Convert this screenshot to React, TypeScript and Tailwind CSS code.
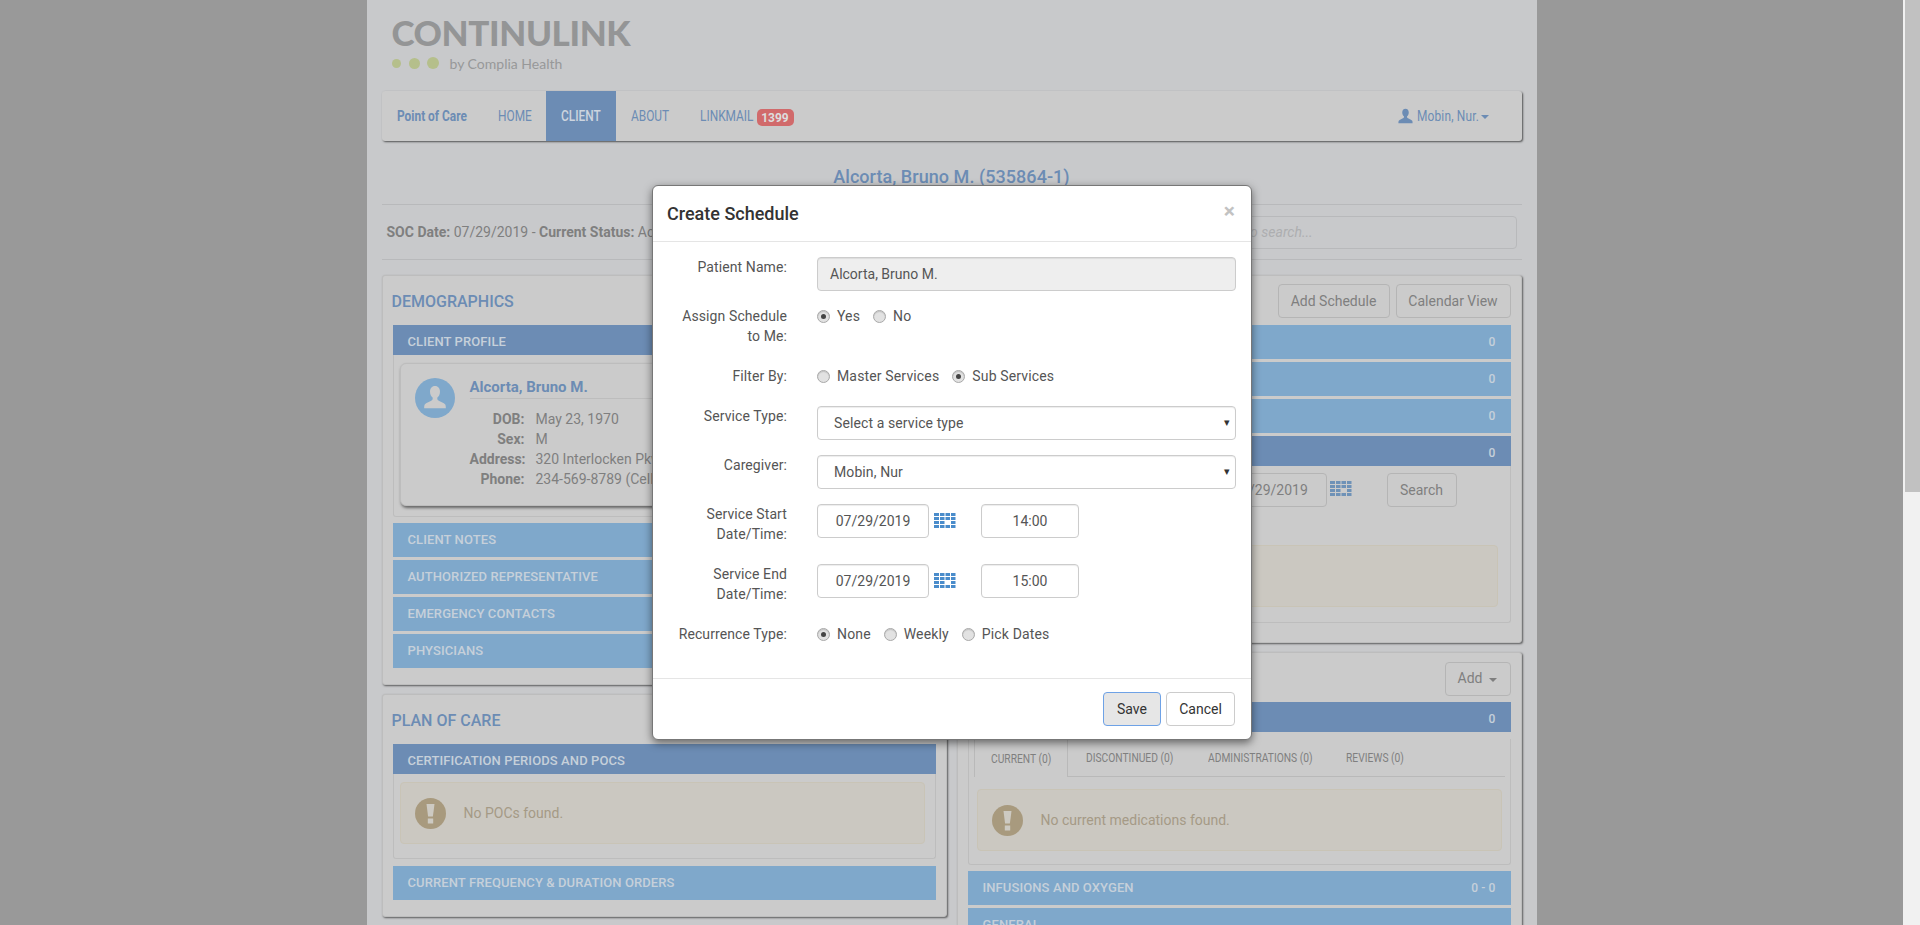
import React from "react";

const Radio = ({ on }: { on?: boolean }) => (
  <span className="w-[13px] h-[13px] rounded-full border border-[#a9a9a9] bg-[#e2e2e2] shadow-[inset_0_1px_1px_rgba(0,0,0,0.15)] flex items-center justify-center shrink-0">
    {on && <span className="w-[5px] h-[5px] rounded-full bg-[#444]" />}
  </span>
);

const RadioGroup = ({ items }: { items: [string, boolean][] }) => (
  <div className="flex items-center h-[20px] gap-[13px]">
    {items.map(([t, on]) => (
      <span key={t} className="flex items-center gap-[7px]">
        <Radio on={on} />
        <span className="text-[14px] tracking-[0.15px] text-[#555]">{t}</span>
      </span>
    ))}
  </div>
);

const Cal = ({ dim }: { dim?: boolean }) => {
  const xs = [0, 6, 11.5, 17];
  const ys = [0, 4, 8, 12];
  return (
    <svg width="22" height="15" viewBox="0 0 22 15" className="shrink-0">
      {ys.map((y, r) =>
        xs.map((x, c) =>
          r === 2 && c === 2 ? null : (
            <rect key={`${r}${c}`} x={x} y={y} width={c === 0 ? 5 : 4.5} height="3" fill={dim ? "#6f92b7" : "#4a8ccb"} />
          )
        )
      )}
    </svg>
  );
};

const Row = ({ label, mb, children }: { label: React.ReactNode; mb: string; children: React.ReactNode }) => (
  <div className={`flex ${mb}`}>
    <div className="w-[134px] text-right text-[14px] tracking-[0.1px] leading-[20px] text-[#555] shrink-0">{label}</div>
    <div className="ml-[30px] w-[419px]">{children}</div>
  </div>
);

const inputBase =
  "h-[34px] border border-[#ccc] rounded-[4px] text-[14px] text-[#555] flex items-center shadow-[inset_0_1px_1px_rgba(0,0,0,0.075)]";

const Select = ({ v }: { v: string }) => (
  <div className={`${inputBase} pl-[16px] pr-[5px] justify-between`}>
    <span className="tracking-[0.1px]">{v}</span>
    <span className="text-[11px] text-[#333]">▾</span>
  </div>
);

const DateTime = ({ d, t }: { d: string; t: string }) => (
  <div className="flex items-center">
    <div className={`${inputBase} w-[112px] justify-center`}>{d}</div>
    <span className="ml-[5px] -mt-[1px]"><Cal /></span>
    <div className={`${inputBase} w-[98px] justify-center ml-[25px]`}>{t}</div>
  </div>
);

const Warn = ({ size = 31 }: { size?: number }) => (
  <svg width={size} height={size} viewBox="0 0 31 31" className="shrink-0">
    <circle cx="15.5" cy="15.5" r="15.5" fill="#a89a7e" />
    <path d="M11.5 6h8l-1.6 12.5h-4.8z" fill="#cdcac2" />
    <rect x="12.8" y="20.5" width="5.4" height="5" fill="#cdcac2" />
  </svg>
);

const Alert = ({ text, cls }: { text?: string; cls: string }) => (
  <div className={`rounded-[4px] border border-[#c9c4b6] bg-[#cbc8c1] flex items-center pl-[14px] ${cls}`}>
    {text && (
      <>
        <Warn />
        <span className="ml-[18px] text-[14px] text-[#a59a86]">{text}</span>
      </>
    )}
  </div>
);

const Bar = ({ t, n, dark, h = "h-[34px]", cls = "" }: { t?: string; n?: string; dark?: boolean; h?: string; cls?: string }) => (
  <div className={`${h} ${dark ? "bg-[#6c8cb4] pt-[3px]" : "bg-[#7fa8cb]"} ${cls} flex items-center justify-between pl-[15px] pr-[15px] text-[13px] tracking-[0.1px] font-medium text-[#c6d0da] shrink-0`}>
    <span>{t}</span>
    {n && <span className="text-[12px]">{n}</span>}
  </div>
);

const Panel = ({ title, right, cls = "", children }: { title?: string; right?: React.ReactNode; cls?: string; children: React.ReactNode }) => (
  <div className={`rounded-[3px] border border-[#bdbdbd] bg-[#cbcbcb] shadow-[1px_1px_2px_rgba(0,0,0,0.55)] px-[10px] ${cls}`}>
    <div className="h-[49px] pt-[1px] flex items-center justify-between">
      <span className="text-[16px] font-medium text-[#6c8cb4] -ml-[1px] mt-[1px]">{title}</span>
      {right}
    </div>
    {children}
  </div>
);

const GhostBtn = ({ children, cls = "" }: { children: React.ReactNode; cls?: string }) => (
  <div className={`h-[34px] rounded-[4px] border border-[#b5b5b5] text-[14px] text-[#7f7f7f] flex items-center justify-center ${cls}`}>
    {children}
  </div>
);

const Person = ({ size, fill }: { size: number; fill: string }) => (
  <svg width={size} height={size} viewBox="0 0 24 24">
    <path d="M12 1c-3 0-4.600 2.300-4.600 5.200 0 2.300 1 4.400 2.400 5.400.2 1.200 0 2-.6 2.500-1.500 1-5.600 2.400-6.700 4-.4.700-.5 2.200-.5 3.400h20c0-1.200-.1-2.700-.5-3.400-1.100-1.600-5.200-3-6.700-4-.6-.5-.8-1.300-.6-2.500 1.400-1 2.400-3.100 2.400-5.400C16.600 3.300 15 1 12 1z" fill={fill} />
  </svg>
);

const Narrow = ({ w, children }: { w: string; children: React.ReactNode }) => (
  <span className={`${w} block shrink-0 mt-[1px]`}>
    <span className="inline-block origin-left scale-x-[.85] whitespace-nowrap">{children}</span>
  </span>
);

const TabNarrow = ({ w, children }: { w: string; children: React.ReactNode }) => (
  <span className={`${w} block shrink-0 mt-[2px]`}>
    <span className="inline-block origin-left scale-x-[.82] whitespace-nowrap">{children}</span>
  </span>
);

export default function App() {
  return (
    <div className="flex h-[925px] overflow-hidden relative font-['Roboto',sans-serif]">
      <div className="flex-1 min-w-0 bg-[#999999] flex justify-center">
        <div className="w-[1170px] h-[925px] overflow-hidden bg-[#c8c9cb] px-[15px]">
          {/* logo */}
          <div className="h-[91px] pl-[10px] pt-[13px]">
            <div className="font-['Lato',sans-serif] font-black text-[35px] leading-[38px] tracking-[-0.4px] text-[#949596]">CONTINULINK</div>
            <div className="flex items-center h-[20px] mt-[2px]">
              <span className="w-[9px] h-[9px] rounded-full bg-[#b5bf8b]" />
              <span className="w-[11px] h-[11px] rounded-full bg-[#b5bf8b] ml-[8px]" />
              <span className="w-[12px] h-[12px] rounded-full bg-[#b5bf8b] ml-[7px]" />
              <span className="ml-[11px] text-[14px] font-['Lato',sans-serif] text-[#979899]">by Complia Health</span>
            </div>
          </div>

          {/* navbar */}
          <div className="h-[50px] flex items-stretch rounded-[3px] bg-[#cbcbcb] shadow-[1px_1px_2px_rgba(0,0,0,0.6)] text-[#6c8cb4] text-[14px]">
            <span className="flex items-center px-[15px] font-bold"><Narrow w="w-[71px]">Point of Care</Narrow></span>
            <span className="flex items-center px-[15px]"><Narrow w="w-[33px]">HOME</Narrow></span>
            <span className="flex items-center px-[15px] font-medium bg-[#6c8cb4] text-[#cdd5df]"><Narrow w="w-[40px]">CLIENT</Narrow></span>
            <span className="flex items-center px-[15px]"><Narrow w="w-[39px]">ABOUT</Narrow></span>
            <span className="flex items-center pl-[15px]"><Narrow w="w-[53px]">LINKMAIL</Narrow></span>
            <span className="self-center ml-[4px] mt-[3px] h-[17px] w-[37px] rounded-[5px] bg-[#d16a6b] text-[#ddd] text-[12px] font-bold flex items-center justify-center">1399</span>
            <span className="ml-auto mr-[33px] flex items-center">
              <Person size={17} fill="#6c8cb4" />
              <span className="ml-[3px] tracking-[0.2px]"><Narrow w="w-[61px]">Mobin, Nur.</Narrow></span>
              <span className="ml-[3px] mt-[2px] w-0 h-0 border-x-[4px] border-x-transparent border-t-[4px] border-t-[#6c8cb4]" />
            </span>
          </div>

          {/* client name */}
          <div className="h-[64px] border-b border-[#b8b9bb] pt-[23px] text-center text-[18px] tracking-[0.05px] leading-[26px] font-medium text-[#6c8cb4]">
            Alcorta, Bruno M. (535864-1)
          </div>

          {/* status */}
          <div className="h-[55px] border-b border-[#b8b9bb] flex items-center justify-between pl-[5px] pr-[5px] text-[14px] text-[#7f7f7f]">
            <span>
              <b className="font-bold">SOC Date:</b> 07/29/2019 - <b className="font-bold">Current Status:</b> Active
            </span>
            <div className="w-[324px] h-[33px] rounded-[4px] border border-[#b8b9bb] flex items-center pl-[20px] italic text-[#adaeb0]">
              Type to search...
            </div>
          </div>

          {/* columns */}
          <div className="flex gap-[10px] mt-[15px] items-start">
            <div className="w-[565px] flex flex-col gap-[9px]">
              <Panel title="DEMOGRAPHICS" cls="pb-[16px]">
                <Bar t="CLIENT PROFILE" dark h="h-[30px]" />
                <div className="border-x border-b border-[#bdbdbd] px-[6px] pt-[8px] pb-[10px] rounded-b-[3px]">
                  <div className="h-[143px] rounded-[6px] bg-[#cbcbcb] border border-[#bdbdbd] shadow-[1px_2px_3px_rgba(0,0,0,0.5)] flex pl-[14px] pt-[14px]">
                    <div className="w-[40px] h-[40px] rounded-full bg-[#7fa8cb] flex items-center justify-center shrink-0">
                      <Person size={26} fill="#cbcbcb" />
                    </div>
                    <div className="ml-[15px] flex-1 mr-[15px]">
                      <div className="h-[21px] border-b border-[#bdbdbd] text-[15px] font-bold leading-[18px] text-[#6c8cb4]">Alcorta, Bruno M.</div>
                      <div className="mt-[10px] grid grid-cols-[55px_1fr] gap-x-[11px] text-[14px] leading-[20px] text-[#7f7f7f]">
                        <b className="text-right font-bold">DOB:</b><span>May 23, 1970</span>
                        <b className="text-right font-bold">Sex:</b><span>M</span>
                        <b className="text-right font-bold">Address:</b><span>320 Interlocken Pkwy</span>
                        <b className="text-right font-bold">Phone:</b><span>234-569-8789 (Cell)</span>
                      </div>
                    </div>
                  </div>
                </div>
                <div className="flex flex-col gap-[3px] mt-[6px]">
                  <Bar t="CLIENT NOTES" />
                  <Bar t="AUTHORIZED REPRESENTATIVE" />
                  <Bar t="EMERGENCY CONTACTS" />
                  <Bar t="PHYSICIANS" />
                </div>
              </Panel>

              <Panel title="PLAN OF CARE" cls="pb-[16px]">
                <Bar t="CERTIFICATION PERIODS AND POCS" dark h="h-[30px]" />
                <div className="border-x border-b border-[#bdbdbd] pl-[6px] pr-[10px] pt-[8px] pb-[14px] rounded-b-[3px]">
                  <Alert text="No POCs found." cls="h-[62px]" />
                </div>
                <Bar t="CURRENT FREQUENCY & DURATION ORDERS" cls="mt-[7px]" />
              </Panel>
            </div>

            <div className="w-[565px] flex flex-col gap-[9px]">
              <Panel
                cls="pb-[19px]"
                right={
                  <div className="flex gap-[6px]">
                    <GhostBtn cls="w-[112px]">Add Schedule</GhostBtn>
                    <GhostBtn cls="w-[115px]">Calendar View</GhostBtn>
                  </div>
                }
              >
                <div className="flex flex-col gap-[3px]">
                  <Bar n="0" />
                  <Bar n="0" />
                  <Bar n="0" />
                  <Bar n="0" dark h="h-[30px]" />
                </div>
                <div className="border-x border-b border-[#bdbdbd] pt-[7px] pb-[15px] rounded-b-[3px]">
                  <div className="flex items-center ml-[246px]">
                    <GhostBtn cls="w-[112px]">07/29/2019</GhostBtn>
                    <span className="ml-[3px] -mt-[4px]"><Cal dim /></span>
                    <GhostBtn cls="w-[70px] ml-[35px]">Search</GhostBtn>
                  </div>
                  <div className="mx-[8px] mt-[38px] mr-[12px]">
                    <Alert cls="h-[62px]" />
                  </div>
                </div>
              </Panel>

              <Panel
                right={
                  <GhostBtn cls="w-[66px] gap-[7px] mt-[1px]">
                    Add
                    <span className="mt-[2px] w-0 h-0 border-x-[4px] border-x-transparent border-t-[4px] border-t-[#7f7f7f]" />
                  </GhostBtn>
                }
              >
                <Bar n="0" dark h="h-[30px]" />
                <div className="border-x border-b border-[#bdbdbd] pb-[13px] rounded-b-[3px]">
                  <div className="mt-[7px] h-[38px] mx-[5px] border-b border-[#b9b9b9] flex text-[12.5px] text-[#7f7f7f]">
                    <span className="w-[94px] h-[38px] border-x border-t border-[#b9b9b9] bg-[#cbcbcb] flex items-center pl-[16px]"><TabNarrow w="w-[61px]">CURRENT (0)</TabNarrow></span>
                    <span className="flex items-center ml-[18px]"><TabNarrow w="w-[87px]">DISCONTINUED (0)</TabNarrow></span>
                    <span className="flex items-center ml-[35px]"><TabNarrow w="w-[104px]">ADMINISTRATIONS (0)</TabNarrow></span>
                    <span className="flex items-center ml-[34px]"><TabNarrow w="w-[58px]">REVIEWS (0)</TabNarrow></span>
                  </div>
                  <div className="mx-[8px] mt-[12px]">
                    <Alert text="No current medications found." cls="h-[62px]" />
                  </div>
                </div>
                <div className="flex flex-col gap-[3px] mt-[6px]">
                  <Bar t="INFUSIONS AND OXYGEN" n="0 - 0" />
                  <Bar t="GENERAL" />
                </div>
              </Panel>
            </div>
          </div>
        </div>
      </div>

      {/* scrollbar */}
      <div className="w-[17px] bg-[#f1f1f1] pl-[2px]">
        <div className="h-[492px] bg-[#c1c1c1]" />
      </div>

      {/* modal */}
      <div className="absolute left-[652px] top-[185px] w-[600px] rounded-[6px] border border-[#777] bg-white shadow-[0_3px_9px_rgba(0,0,0,0.5)]">
        <div className="h-[56px] border-b border-[#e5e5e5] flex items-center justify-between pl-[14px] pr-[16px]">
          <span className="text-[18px] font-medium text-[#333]">Create Schedule</span>
          <span className="text-[21px] font-bold text-[#c2c2c2] leading-none -mt-[4px]">×</span>
        </div>
        <div className="pt-[15px]">
          <Row label="Patient Name:" mb="mb-[15px]">
            <div className={`${inputBase} bg-[#eeeeee] pl-[12px]`}>Alcorta, Bruno M.</div>
          </Row>
          <Row label={<>Assign Schedule<br />to Me:</>} mb="mb-[20px]">
            <RadioGroup items={[["Yes", true], ["No", false]]} />
          </Row>
          <Row label="Filter By:" mb="mb-[20px]">
            <RadioGroup items={[["Master Services", false], ["Sub Services", true]]} />
          </Row>
          <Row label="Service Type:" mb="mb-[15px]"><Select v="Select a service type" /></Row>
          <Row label="Caregiver:" mb="mb-[15px]"><Select v="Mobin, Nur" /></Row>
          <Row label={<>Service Start<br />Date/Time:</>} mb="mb-[20px]"><DateTime d="07/29/2019" t="14:00" /></Row>
          <Row label={<>Service End<br />Date/Time:</>} mb="mb-[20px]"><DateTime d="07/29/2019" t="15:00" /></Row>
          <Row label="Recurrence Type:" mb="mb-[34px]">
            <RadioGroup items={[["None", true], ["Weekly", false], ["Pick Dates", false]]} />
          </Row>
        </div>
        <div className="border-t border-[#e5e5e5] h-[61px] flex items-start justify-end gap-[5px] pt-[13px] pr-[16px]">
          <div className="h-[34px] w-[58px] rounded-[4px] border border-[#6ea2e6] bg-[#e6e6e6] text-[14px] text-[#333] flex items-center justify-center">Save</div>
          <div className="h-[34px] w-[69px] rounded-[4px] border border-[#ccc] text-[14px] text-[#333] flex items-center justify-center">Cancel</div>
        </div>
      </div>
    </div>
  );
}
